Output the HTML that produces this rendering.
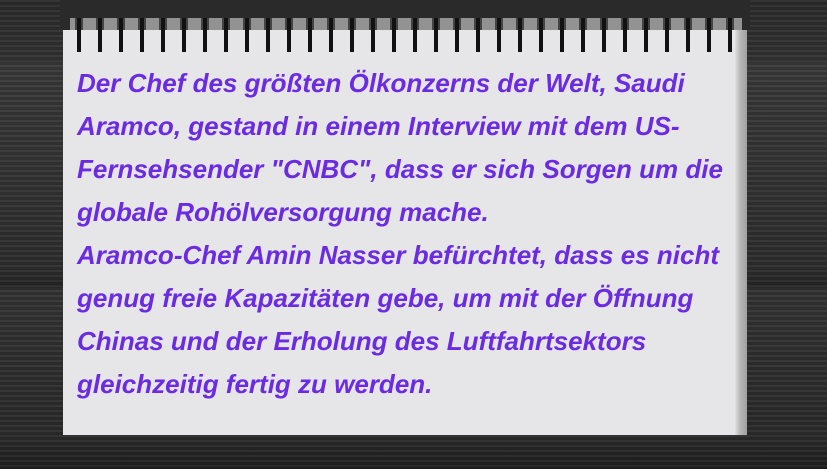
<!DOCTYPE html>
<html><head><meta charset="utf-8"><style>
html,body{margin:0;padding:0}
body{width:827px;height:469px;overflow:hidden;position:relative;
background:
repeating-linear-gradient(180deg,rgba(255,255,255,0.04) 0 2px,rgba(0,0,0,0.1) 2px 5px),
linear-gradient(180deg,#2c2c2c 0,#333 60px,#2a2a2a 61px,#3a3a3a 62px,#2e2e2e 270px,#262626 285px,#343434 290px,#2b2b2b 440px,#1f1f1f 469px);}
.top{position:absolute;left:60px;top:0;width:690px;height:28px;background:#2a2a2a;}
.paper{position:absolute;left:63px;top:30px;width:684px;height:405px;background:#e6e5e8;}
.edge{position:absolute;left:735px;top:30px;width:12px;height:405px;background:linear-gradient(90deg,#e0e0e0,#b9b9b9 40%,#a0a0a0);}
.rings{position:absolute;left:70px;top:18px;width:672px;height:34px;
background:repeating-linear-gradient(90deg,transparent 0 7px,#111 7px 11px,transparent 11px 21px);}
.rings2{position:absolute;left:70px;top:18px;width:672px;height:12px;
background:repeating-linear-gradient(90deg,#d8d8d8 0 5px,#555 5px 13px,#d8d8d8 13px 21px);opacity:.6}
.t{position:absolute;left:77px;top:62px;color:#6a2be2;font-family:"Liberation Sans",sans-serif;font-style:italic;font-weight:bold;font-size:26px;line-height:43px;letter-spacing:0px;white-space:nowrap;}
</style></head><body>
<div class="top"></div>
<div class="paper"></div>
<div class="edge"></div>
<div class="rings2"></div>
<div class="rings"></div>
<div class="t">Der Chef des größten Ölkonzerns der Welt, Saudi<br>Aramco, gestand in einem Interview mit dem US-<br>Fernsehsender "CNBC", dass er sich Sorgen um die<br>globale Rohölversorgung mache.<br>Aramco-Chef Amin Nasser befürchtet, dass es nicht<br>genug freie Kapazitäten gebe, um mit der Öffnung<br>Chinas und der Erholung des Luftfahrtsektors<br>gleichzeitig fertig zu werden.</div>
</body></html>
